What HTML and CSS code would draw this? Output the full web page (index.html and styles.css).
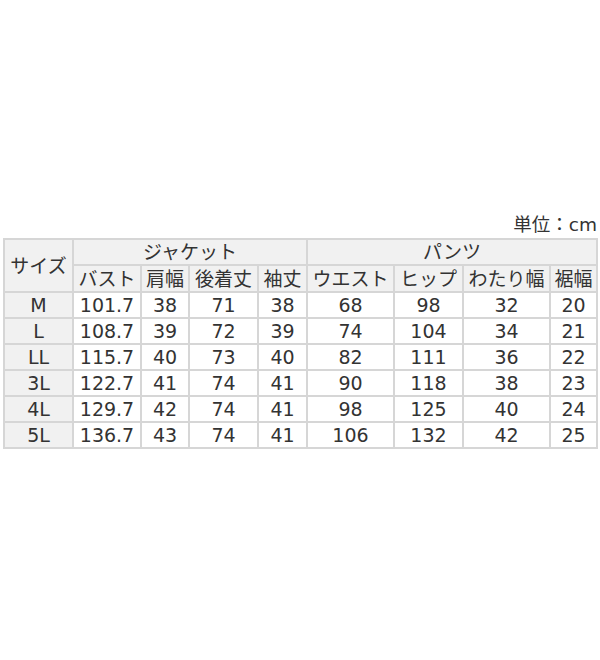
FILE: index.html
```html
<!DOCTYPE html>
<html lang="ja">
<head>
<meta charset="utf-8">
<link rel="stylesheet" href="styles.css">
</head>
<body>
<div class="wrap">
  <div class="unit">単位：cm</div>
  <table class="size-table">
    <colgroup>
      <col class="c1"><col class="c2"><col class="c3"><col class="c4"><col class="c5">
      <col class="c6"><col class="c7"><col class="c8"><col class="c9">
    </colgroup>
    <thead>
      <tr class="h1">
        <th rowspan="2">サイズ</th>
        <th colspan="4">ジャケット</th>
        <th colspan="4">パンツ</th>
      </tr>
      <tr class="h2">
        <th>バスト</th><th>肩幅</th><th>後着丈</th><th>袖丈</th>
        <th>ウエスト</th><th>ヒップ</th><th>わたり幅</th><th>裾幅</th>
      </tr>
    </thead>
    <tbody>
      <tr><th>M</th><td>101.7</td><td>38</td><td>71</td><td>38</td><td>68</td><td>98</td><td>32</td><td>20</td></tr>
      <tr><th>L</th><td>108.7</td><td>39</td><td>72</td><td>39</td><td>74</td><td>104</td><td>34</td><td>21</td></tr>
      <tr><th>LL</th><td>115.7</td><td>40</td><td>73</td><td>40</td><td>82</td><td>111</td><td>36</td><td>22</td></tr>
      <tr><th>3L</th><td>122.7</td><td>41</td><td>74</td><td>41</td><td>90</td><td>118</td><td>38</td><td>23</td></tr>
      <tr><th>4L</th><td>129.7</td><td>42</td><td>74</td><td>41</td><td>98</td><td>125</td><td>40</td><td>24</td></tr>
      <tr><th>5L</th><td>136.7</td><td>43</td><td>74</td><td>41</td><td>106</td><td>132</td><td>42</td><td>25</td></tr>
    </tbody>
  </table>
</div>
</body>
</html>
```
FILE: styles.css
```css
html, body {
  margin: 0;
  padding: 0;
  background: #ffffff;
}
body {
  width: 600px;
  height: 660px;
  font-family: "DejaVu Sans", "Noto Sans CJK JP", sans-serif;
  color: #333333;
}
.wrap {
  padding: 213px 2px 0 3px;
}
.unit {
  text-align: right;
  font-size: 18.5px;
  line-height: 24px;
  height: 24px;
  padding-right: 1px;
}
.size-table {
  border-collapse: collapse;
  table-layout: fixed;
  width: 595px;
  font-size: 19px;
  margin-top: 1px;
}
.c1 { width: 69px; }
.c2 { width: 68px; }
.c3 { width: 48px; }
.c4 { width: 69px; }
.c5 { width: 49px; }
.c6 { width: 87px; }
.c7 { width: 69px; }
.c8 { width: 87px; }
.c9 { width: 47px; }
.size-table th,
.size-table td {
  border: 2px solid #d6d6d6;
  padding: 0;
  text-align: center;
  font-weight: normal;
  white-space: nowrap;
  overflow: hidden;
  height: 24px;
  line-height: 24px;
}
.size-table thead th {
  background: #f1f1f1;
}
.size-table .h1 th { height: 23px; }
.size-table .h2 th { height: 25px; }
.size-table tbody th {
  background: #f1f1f1;
}
.size-table td {
  background: #ffffff;
}
```
